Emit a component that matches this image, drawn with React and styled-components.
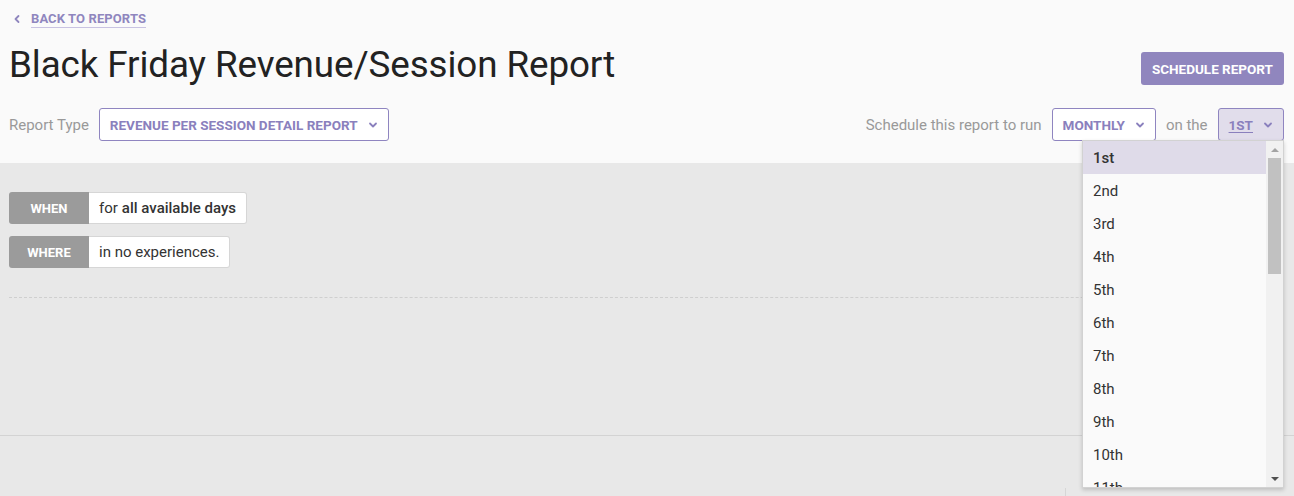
import React from "react";
import styled, { createGlobalStyle } from "styled-components";

const GlobalStyle = createGlobalStyle`
  html, body {
    margin: 0;
    padding: 0;
    background: #e8e8e8;
    font-family: Roboto, "Noto Sans", Arial, sans-serif;
    color: #333;
  }
  * { box-sizing: border-box; }
`;

const Page = styled.div`
  width: 1294px;
  height: 496px;
  overflow: hidden;
  display: flex;
  flex-direction: column;
  background: #e8e8e8;
`;

const Header = styled.header`
  background: #fafafa;
  height: 163px;
  padding: 10px 10px 0 9px;
  display: flex;
  flex-direction: column;
`;

const BackLink = styled.a`
  display: flex;
  align-items: center;
  gap: 9px;
  padding-left: 3px;
  height: 18px;
  font-size: 13px;
  font-weight: 700;
  letter-spacing: 0.1px;
  color: #8f86be;
  text-transform: uppercase;
  span {
    border-bottom: 1px solid #c9c3e2;
    line-height: 16px;
  }
`;

const TitleRow = styled.div`
  display: flex;
  justify-content: space-between;
  align-items: flex-start;
  margin-top: 15px;
  height: 48px;
`;

const Title = styled.h1`
  margin: 0;
  font-size: 36.8px;
  font-weight: 400;
  line-height: 44px;
  color: #222;
  letter-spacing: -0.1px;
`;

const PrimaryButton = styled.button`
  margin-top: 9px;
  height: 33px;
  padding: 0 11px;
  border: none;
  border-radius: 3px;
  background: #9086be;
  color: #fff;
  font-family: inherit;
  font-size: 13.5px;
  font-weight: 700;
  text-transform: uppercase;
`;

const ControlsRow = styled.div`
  display: flex;
  justify-content: space-between;
  align-items: center;
  margin-top: 17px;
  height: 33px;
`;

const Group = styled.div`
  display: flex;
  align-items: center;
  gap: 10px;
`;

const Label = styled.span`
  font-size: 15px;
  color: #999;
`;

const SelectWrap = styled.div`
  position: relative;
`;

const Select = styled.button`
  height: 33px;
  display: flex;
  align-items: center;
  gap: 10px;
  padding: 0 10px;
  border: 1px solid #8f85c0;
  border-radius: 3px;
  background: ${(p) => (p.$open ? "#e1ddeb" : "#fff")};
  color: #8a80bd;
  font-family: inherit;
  font-size: 13.5px;
  font-weight: 700;
  text-transform: uppercase;
  span {
    text-decoration: ${(p) => (p.$open ? "underline" : "none")};
    text-underline-offset: 2px;
  }
`;

const Menu = styled.div`
  position: absolute;
  top: 32px;
  right: 0;
  width: 202px;
  height: 348px;
  background: #fafafa;
  border: 1px solid #d2d2d2;
  box-shadow: 0 2px 4px rgba(0, 0, 0, 0.18);
  display: flex;
  z-index: 10;
`;

const MenuList = styled.ul`
  list-style: none;
  margin: 0;
  padding: 0;
  flex: 1;
  overflow: hidden;
`;

const MenuItem = styled.li`
  height: 33px;
  display: flex;
  align-items: center;
  padding-left: 10px;
  font-size: 15px;
  color: #333;
  font-weight: ${(p) => (p.$active ? 500 : 400)};
  background: ${(p) => (p.$active ? "#dfdbe9" : "transparent")};
`;

const Scrollbar = styled.div`
  width: 17px;
  background: #f1f1f1;
  display: flex;
  flex-direction: column;
  align-items: center;
`;

const Arrow = styled.div`
  height: 17px;
  width: 17px;
  display: flex;
  align-items: center;
  justify-content: center;
  &::before {
    content: "";
    border-left: 4px solid transparent;
    border-right: 4px solid transparent;
    ${(p) => (p.$down ? "border-top: 4px solid #505050;" : "border-bottom: 4px solid #a3a3a3;")}
  }
`;

const Thumb = styled.div`
  width: 13px;
  height: 116px;
  background: #c1c1c1;
`;

const Main = styled.main`
  padding: 29px 10px 0 9px;
  display: flex;
  flex-direction: column;
  gap: 12px;
`;

const Condition = styled.div`
  display: flex;
  height: 32px;
`;

const Tag = styled.div`
  width: 80px;
  background: #9b9b9b;
  color: #fff;
  font-size: 13px;
  font-weight: 700;
  display: flex;
  align-items: center;
  justify-content: center;
  border-radius: 3px 0 0 3px;
`;

const Value = styled.div`
  background: #fff;
  border: 1px solid #d6d6d6;
  border-left: none;
  border-radius: 0 3px 3px 0;
  padding: 0 10px;
  display: flex;
  align-items: center;
  font-size: 15px;
  color: #333;
  b { font-weight: 500; margin-left: 4px; }
`;

const Dashed = styled.hr`
  margin: 17px 0 0;
  border: none;
  border-top: 1px dashed #cfcfcf;
`;

const Footer = styled.div`
  margin-top: 137px;
  border-top: 1px solid #d3d3d3;
  flex: 1;
  display: flex;
  justify-content: flex-end;
  align-items: flex-end;
`;

const Column = styled.div`
  width: 229px;
  height: 8px;
  border-left: 1px solid #d6d6d6;
`;

const Chevron = ({ dir = "down", size = 10 }) => (
  <svg width={size} height={size} viewBox="0 0 10 10">
    <polyline
      points={dir === "down" ? "2,3.5 5,6.5 8,3.5" : "6.5,2 3.5,5 6.5,8"}
      fill="none"
      stroke="currentColor"
      strokeWidth="1.8"
      strokeLinecap="round"
      strokeLinejoin="round"
    />
  </svg>
);

const days = ["1st", "2nd", "3rd", "4th", "5th", "6th", "7th", "8th", "9th", "10th", "11th"];

export default function App() {
  return (
    <Page>
      <GlobalStyle />
      <Header>
        <BackLink>
          <Chevron dir="left" />
          <span>Back to reports</span>
        </BackLink>
        <TitleRow>
          <Title>Black Friday Revenue/Session Report</Title>
          <PrimaryButton>Schedule report</PrimaryButton>
        </TitleRow>
        <ControlsRow>
          <Group>
            <Label>Report Type</Label>
            <Select>
              <span>Revenue per session detail report</span>
              <Chevron />
            </Select>
          </Group>
          <Group>
            <Label>Schedule this report to run</Label>
            <Select>
              <span>Monthly</span>
              <Chevron />
            </Select>
            <Label>on the</Label>
            <SelectWrap>
              <Select $open>
                <span>1st</span>
                <Chevron />
              </Select>
              <Menu>
                <MenuList>
                  {days.map((d, i) => (
                    <MenuItem key={d} $active={i === 0}>{d}</MenuItem>
                  ))}
                </MenuList>
                <Scrollbar>
                  <Arrow />
                  <Thumb />
                  <div style={{ flex: 1 }} />
                  <Arrow $down />
                </Scrollbar>
              </Menu>
            </SelectWrap>
          </Group>
        </ControlsRow>
      </Header>
      <Main>
        <Condition>
          <Tag>WHEN</Tag>
          <Value>for<b>all available days</b></Value>
        </Condition>
        <Condition>
          <Tag>WHERE</Tag>
          <Value>in no experiences.</Value>
        </Condition>
        <Dashed />
      </Main>
      <Footer>
        <Column />
      </Footer>
    </Page>
  );
}
